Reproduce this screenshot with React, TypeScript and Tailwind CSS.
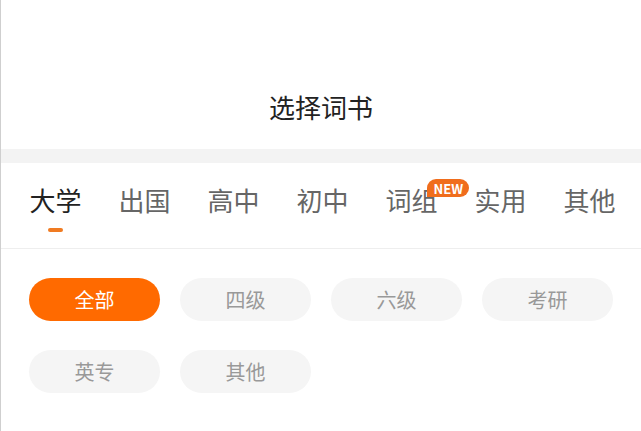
import React from 'react';

const tabs = ['大学', '出国', '高中', '初中', '词组', '实用', '其他'];
const chips = ['全部', '四级', '六级', '考研', '英专', '其他'];

const font = { fontFamily: '"Noto Sans CJK SC", "Noto Sans", sans-serif' };

export default function App() {
  return (
    <div className="w-[641px] h-[431px] bg-white border-l border-[#cfcfcf] overflow-hidden" style={font}>
      {/* Header */}
      <div className="h-[149px] flex items-end justify-center pb-[29px]">
        <h1 className="text-[26px] leading-none text-[#222]">选择词书</h1>
      </div>
      <div className="h-[14px] bg-[#f3f3f3]" />

      {/* Tabs */}
      <div className="h-[86px] flex pl-[10px] border-b border-[#eeeeee]">
        {tabs.map((t, i) => (
          <div key={t} className="w-[89px] flex flex-col items-center pt-[24px]">
            <div className="relative">
              <span className={`text-[26px] leading-none ${i === 0 ? 'text-[#222]' : 'text-[#666]'}`}>{t}</span>
              {t === '词组' && (
                <span className="absolute left-[42px] top-[-8px] h-[18px] px-[6px] flex items-center rounded-t-full rounded-br-full bg-[#f06d1c] text-white text-[13px] font-semibold leading-none">
                  NEW
                </span>
              )}
            </div>
            {i === 0 && <div className="mt-[12px] w-[15px] h-[4px] rounded-full bg-[#f07b22]" />}
          </div>
        ))}
      </div>

      {/* Chips */}
      <div className="grid grid-cols-4 gap-x-[20px] gap-y-[29px] pl-[28px] pr-[28px] pt-[29px]">
        {chips.map((c, i) => (
          <div
            key={c + i}
            className={`h-[43px] rounded-full flex items-center justify-center text-[20px] ${
              i === 0 ? 'bg-[#ff6a00] text-white' : 'bg-[#f5f5f5] text-[#999]'
            }`}
          >
            {c}
          </div>
        ))}
      </div>
    </div>
  );
}
